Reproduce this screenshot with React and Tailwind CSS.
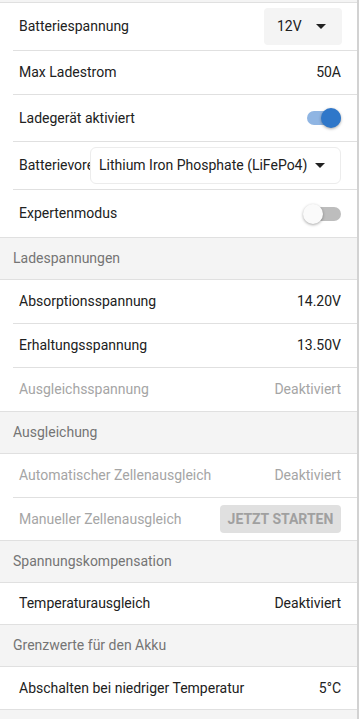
import React from "react";

const Caret = () => (
  <svg width="10" height="5" viewBox="0 0 10 5" className="shrink-0">
    <path d="M0 0 L10 0 L5 5 Z" fill="#212121" />
  </svg>
);

const Toggle = ({ on }) => (
  <div className="relative w-[38px] h-[20px] flex items-center justify-end">
    <div className={`w-[34px] h-[14px] rounded-full ${on ? "bg-[#8fb5e3]" : "bg-[#bdbdbd]"}`} />
    <div
      className={`absolute top-0 w-[20px] h-[20px] rounded-full shadow-[0_1px_3px_rgba(0,0,0,0.35)] ${
        on ? "right-0 bg-[#2f77c9]" : "left-0 bg-[#fafafa]"
      }`}
    />
  </div>
);

// h is the full height, border included
const Row = ({ label, right, last, disabled, h = "h-[44px]" }) => (
  <div className="pl-[13px]">
    <div
      className={`flex items-center justify-between pl-[6px] pr-[16px] ${h} ${
        last ? "" : "border-b border-[#e0e0e0]"
      } ${disabled ? "text-[#a5a5a5]" : "text-[#212121]"}`}
    >
      <span>{label}</span>
      {typeof right === "string" ? <span>{right}</span> : right}
    </div>
  </div>
);

const Header = ({ children, h = "h-[42px]" }) => (
  <div className={`${h} flex items-center px-[13px] bg-[#f4f4f4] text-[#757575] border-b border-[#e0e0e0]`}>
    {children}
  </div>
);

const Section = ({ children }) => <div className="border-b border-[#e0e0e0] bg-white">{children}</div>;

export default function App() {
  return (
    <div
      className="w-[361px] h-[719px] overflow-hidden bg-white text-[14px]"
      style={{ fontFamily: "Roboto, 'Liberation Sans', sans-serif" }}
    >
      <div className="w-[359px] h-full border-r-2 border-[#d2d2d2]">
        <div className="h-[3px] bg-[#f4f4f4] border-b border-[#e0e0e0]" />
        <Section>
          <Row
            h="h-[48px]"
            label="Batteriespannung"
            right={
              <div className="-mr-[1px] w-[78px] h-[37px] rounded bg-[#f4f4f4] flex items-center pl-[13px] gap-[14px]">
                <span>12V</span>
                <Caret />
              </div>
            }
          />
          <Row label="Max Ladestrom" right="50A" />
          <Row h="h-[47px]" label="Ladegerät aktiviert" right={<Toggle on />} />
          <div className="pl-[13px]">
            <div className="flex items-center pl-[6px] pr-[16px] h-[48px] border-b border-[#e0e0e0] text-[#212121]">
              <span className="w-[71px] shrink-0 overflow-hidden whitespace-nowrap">Batterievoreinstellung</span>
              <div className="flex-1 h-[37px] rounded-md border border-[#ececec] bg-white flex items-center pl-[8px] pr-[15px] justify-between">
                <span className="whitespace-nowrap">Lithium Iron Phosphate (LiFePo4)</span>
                <Caret />
              </div>
            </div>
          </div>
          <Row h="h-[47px]" last label="Expertenmodus" right={<Toggle />} />
        </Section>

        <Header>Ladespannungen</Header>
        <Section>
          <Row label="Absorptionsspannung" right="14.20V" />
          <Row label="Erhaltungsspannung" right="13.50V" />
          <Row last h="h-[43px]" disabled label="Ausgleichsspannung" right="Deaktiviert" />
        </Section>

        <Header>Ausgleichung</Header>
        <Section>
          <Row disabled label="Automatischer Zellenausgleich" right="Deaktiviert" />
          <Row
            last
            h="h-[42px]"
            disabled
            label="Manueller Zellenausgleich"
            right={
              <div className="w-[121px] h-[28px] rounded bg-[#e0e0e0] text-[#a0a0a0] font-bold text-[14px] flex items-center justify-center">
                JETZT STARTEN
              </div>
            }
          />
        </Section>

        <Header>Spannungskompensation</Header>
        <Section>
          <Row last h="h-[41px]" label="Temperaturausgleich" right="Deaktiviert" />
        </Section>

        <Header>Grenzwerte für den Akku</Header>
        <Section>
          <Row last h="h-[42px]" label="Abschalten bei niedriger Temperatur" right="5°C" />
        </Section>
        <div className="h-[20px] bg-[#f4f4f4]" />
      </div>
    </div>
  );
}
